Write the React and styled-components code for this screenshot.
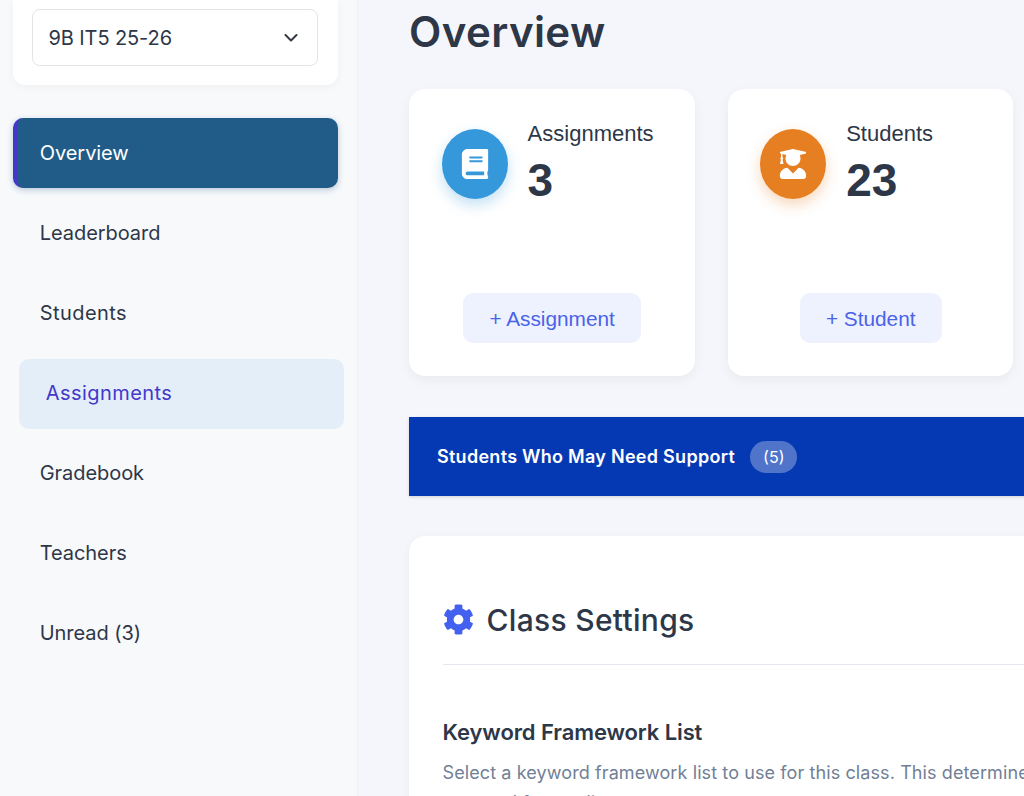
import React from "react";
import styled, { createGlobalStyle } from "styled-components";
import { FaBook, FaUserGraduate, FaCog } from "react-icons/fa";

const UI = `"Inter", "Noto Sans", sans-serif`;
const SANS = `"Liberation Sans", Arial, sans-serif`;

const Global = createGlobalStyle`
  html, body { margin: 0; padding: 0; height: 796px; overflow: hidden; background: #f4f6fb; }
  #root { height: 796px; }
  * { box-sizing: border-box; }
`;
const Page = styled.div`
  display: flex; width: 1024px; height: 796px; overflow: hidden; font-family: ${UI}; color: #2d3748;
`;
const Sidebar = styled.aside`
  flex: 0 0 358px; background: #f8f9fb; border-right: 1px solid #f0f1f5; padding: 0 0 0 12.7px;
`;
const ClassCard = styled.div`
  width: 325.3px; height: 85px; background: #fff; border-radius: 0 0 12px 12px;
  box-shadow: 0 2px 8px rgba(0,0,0,.04); padding: 9px 20px 0 19.3px;
`;
const ClassSelect = styled.div`
  height: 57px; border: 1px solid #e2e4e8; border-radius: 8px; display: flex; align-items: center;
  justify-content: space-between; padding: 0 19px 0 15.5px; font-size: 20px; letter-spacing: -.1px; color: #2d3748;
`;
const Nav = styled.nav`
  display: flex; flex-direction: column; gap: 10px; margin-top: 33px;
`;
const NavItem = styled.a`
  display: flex; align-items: center; width: 325.3px; height: 70px; border-radius: 10px; font-size: 20px;
  letter-spacing: ${p => p.$wide ? ".45px" : "-.05px"};
  padding-left: 27px;
  color: ${p => p.$state === "active" ? "#fff" : p.$state === "hover" ? "#4338ca" : "#2d3748"};
  background: ${p => p.$state === "active" ? "#205c87" : p.$state === "hover" ? "#e4eef8" : "transparent"};
  border-left: ${p => p.$state === "active" ? "4px solid #4338ca" : "none"};
  ${p => p.$state === "active" ? "padding-left: 23px; box-shadow: 0 2px 6px rgba(32,92,135,.3);" : ""}
  ${p => p.$state === "hover" ? "transform: translate(6px, 1px); padding-bottom: 2px;" : ""}
`;
const Main = styled.main`
  flex: 1; min-width: 0; padding: 0 0 0 51px; overflow: hidden; background: #f4f6fb;
`;
const Title = styled.h1`
  margin: 0; height: 89px; padding-top: 6px; font-size: 42px; line-height: 52px; font-weight: 600; letter-spacing: .4px; color: #2d3748;
`;
const Stats = styled.div`
  display: flex; gap: 33px; width: 900px;
`;
const StatCard = styled.section`
  flex: 0 0 285.6px; height: 287px; background: #fff; border-radius: 16px; box-shadow: 0 4px 12px rgba(0,0,0,.05);
  padding: 32px 0 33px 32.6px; display: flex; flex-direction: column; justify-content: space-between;
`;
const StatHead = styled.div`
  display: flex; gap: 20px;
`;
const IconCircle = styled.div`
  width: 66px; height: 70px; margin-top: 8px; border-radius: 50%; display: flex; align-items: center; justify-content: center; color: #fff;
  font-size: 30px; background: ${p => p.$color}; box-shadow: 0 6px 14px ${p => p.$shadow};
`;
const StatText = styled.div`
  font-family: ${SANS}; display: flex; flex-direction: column;
`;
const StatLabel = styled.div`
  font-size: 22px; line-height: 26px; color: #2d3748;
`;
const StatValue = styled.div`
  font-size: 46px; line-height: 56px; padding-top: 5px; font-weight: 700; color: #2d3748;
`;
const AddRow = styled.div`
  display: flex; justify-content: center; padding-right: 32px;
`;
const AddButton = styled.button`
  height: 50px; padding: 2px 26px 0; border: 0; border-radius: 10px; background: #eef2ff; color: #4a63e7;
  font: 20.8px ${SANS};
`;
const Banner = styled.div`
  display: flex; align-items: center; gap: 15px; width: 900px; height: 79px; margin-top: 41px; padding-left: 28px;
  background: #0539b3; color: #fff; box-shadow: 0 1px 3px rgba(0,0,0,.15);
`;
const BannerTitle = styled.span`
  font-size: 18px; font-weight: 600; letter-spacing: .28px;
`;
const Count = styled.span`
  height: 32px; padding: 0 13px; display: flex; align-items: center; border-radius: 16px; background: rgba(255,255,255,.3); font-size: 16px;
`;
const Settings = styled.section`
  width: 900px; height: 400px; margin-top: 40px; background: #fff; border-radius: 16px 0 0 0; padding: 0 33.5px;
  box-shadow: 0 2px 10px rgba(0,0,0,.05);
`;
const SettingsHead = styled.div`
  display: flex; align-items: center; gap: 13px; height: 129px; padding-top: 39px; border-bottom: 1px solid #e5e8ef;
`;
const Gear = styled(FaCog)`
  color: #4361ee; font-size: 31px;
`;
const SettingsTitle = styled.h2`
  margin: 0; font-size: 30px; font-weight: 500; letter-spacing: .3px; color: #2d3748;
`;
const FieldTitle = styled.h3`
  margin: 52px 0 0; font-size: 22px; line-height: 30px; font-weight: 600; letter-spacing: -.1px; color: #2d3748;
`;
const Help = styled.p`
  margin: 11px 0 0; font-size: 18px; line-height: 30px; letter-spacing: .1px; color: #718096; width: 760px;
`;

const navItems = [
  { label: "Overview", state: "active" }, { label: "Leaderboard" }, { label: "Students", wide: true },
  { label: "Assignments", state: "hover", wide: true }, { label: "Gradebook" }, { label: "Teachers" }, { label: "Unread (3)" },
];

export default function App() {
  return (
    <Page>
      <Global />
      <Sidebar>
        <ClassCard>
          <ClassSelect>
            9B IT5 25-26
            <svg width="14" height="8" viewBox="0 0 14 8" fill="none" stroke="#343a40" strokeWidth="2" strokeLinecap="round" strokeLinejoin="round"><path d="M1.5 1 7 6.5 12.5 1" /></svg>
          </ClassSelect>
        </ClassCard>
        <Nav>
          {navItems.map(({ label, state, wide }) => <NavItem key={label} $state={state} $wide={wide}>{label}</NavItem>)}
        </Nav>
      </Sidebar>
      <Main>
        <Title>Overview</Title>
        <Stats>
          <StatCard>
            <StatHead>
              <IconCircle $color="#3498db" $shadow="rgba(52,152,219,.3)"><FaBook /></IconCircle>
              <StatText><StatLabel>Assignments</StatLabel><StatValue>3</StatValue></StatText>
            </StatHead>
            <AddRow><AddButton>+ Assignment</AddButton></AddRow>
          </StatCard>
          <StatCard>
            <StatHead>
              <IconCircle $color="#e67e22" $shadow="rgba(230,126,34,.3)"><FaUserGraduate /></IconCircle>
              <StatText><StatLabel>Students</StatLabel><StatValue>23</StatValue></StatText>
            </StatHead>
            <AddRow><AddButton>+ Student</AddButton></AddRow>
          </StatCard>
        </Stats>
        <Banner><BannerTitle>Students Who May Need Support</BannerTitle><Count>(5)</Count></Banner>
        <Settings>
          <SettingsHead><Gear /><SettingsTitle>Class Settings</SettingsTitle></SettingsHead>
          <FieldTitle>Keyword Framework List</FieldTitle>
          <Help>Select a keyword framework list to use for this class. This determines which keywords are used for grading.</Help>
        </Settings>
      </Main>
    </Page>
  );
}
